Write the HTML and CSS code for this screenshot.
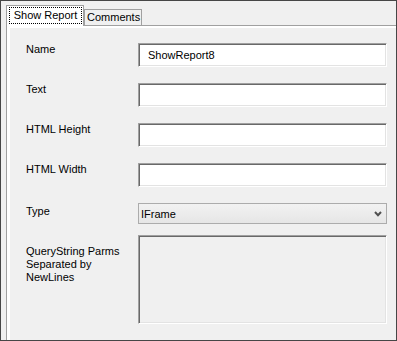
FILE: index.html
```html
<!DOCTYPE html>
<html lang="en">
<head>
    <meta charset="UTF-8">
    <title>Show Report</title>
    <link rel="stylesheet" href="styles.css">
</head>
<body>
    <div class="window">
        <!-- Tab headers -->
        <div class="tabs">
            <div class="tab active"><span class="focus">Show Report</span></div>
            <div class="tab">Comments</div>
        </div>

        <div class="tab-body">
            <div class="page">
                <div class="row">
                    <label>Name</label>
                    <input type="text" class="field" value="ShowReport8">
                </div>
                <div class="row">
                    <label>Text</label>
                    <input type="text" class="field">
                </div>
                <div class="row">
                    <label>HTML Height</label>
                    <input type="text" class="field">
                </div>
                <div class="row">
                    <label>HTML Width</label>
                    <input type="text" class="field">
                </div>
                <div class="row row-type">
                    <label>Type</label>
                    <div class="combo-wrap">
                        <select class="combo">
                            <option>IFrame</option>
                            <option>Inline</option>
                        </select>
                        <svg class="chevron" width="8" height="6" viewBox="0 0 8 6">
                            <polyline points="1,1 4,4.2 7,1" fill="none" stroke="#505050" stroke-width="2"/>
                        </svg>
                    </div>
                </div>
                <div class="row row-parms">
                    <label>QueryString Parms<br>Separated by<br>NewLines</label>
                    <textarea class="field area"></textarea>
                </div>
            </div>
        </div>
    </div>
</body>
</html>
```

FILE: styles.css
```css
:root {
    --face: #f0f0f0;
    --tab-border: #a0a0a0;
    --dark: #696969;
    --shadow: #a0a0a0;
    --light: #e3e3e3;
}

* {
    box-sizing: border-box;
}

body {
    margin: 0;
    background: var(--face);
    font-family: "Liberation Sans", Arial, sans-serif;
    font-size: 11px;
    color: #000;
}

.window {
    width: 397px;
    height: 341px;
    border: 1px solid #464646;
    background: var(--face);
    display: flex;
    flex-direction: column;
}

/* Tabs */
.tabs {
    display: flex;
    align-items: flex-end;
    height: 27px;
    padding-left: 5px;
}

.tab {
    height: 16px;
    padding: 0 1px 0 2px;
    line-height: 15px;
    border: 1px solid var(--tab-border);
    border-bottom: none;
    background: var(--face);
}

.tab.active {
    position: relative;
    z-index: 1;
    height: 21px;
    width: 78px;
    margin-bottom: -1px;
    padding: 1px 1px 0 2px;
    background: #fff;
}

.focus {
    display: block;
    width: 73px;
    height: 17px;
    border: 1px dotted #000;
    line-height: 15px;
    text-align: center;
}

/* Tab body */
.tab-body {
    flex: 1;
    display: flex;
    margin-left: 5px;
    border-top: 1px solid var(--tab-border);
    border-left: 1px solid var(--tab-border);
    background: #fff;
    padding: 2px 0 0 3px;
}

.page {
    flex: 1;
    background: var(--face);
    padding: 15px 0 0 16px;
}

.row {
    display: flex;
    align-items: flex-start;
    margin-bottom: 16px;
}

.row label {
    width: 112px;
    line-height: 13px;
}

.field {
    width: 249px;
    height: 24px;
    margin: 0;
    padding: 0 0 0 9px;
    font: inherit;
    color: #000;
    background: #fff;
    border: 1px solid;
    border-color: var(--shadow) #fff #fff var(--shadow);
    box-shadow: inset 1px 1px 0 var(--dark), inset -1px -1px 0 var(--light);
    outline: none;
}

.row-type {
    margin-bottom: 11px;
}

.row-type label {
    padding-top: 2px;
}

.combo-wrap {
    position: relative;
    width: 249px;
    height: 21px;
}

.combo {
    appearance: none;
    -webkit-appearance: none;
    width: 100%;
    height: 100%;
    margin: 0;
    padding: 0 0 0 2px;
    font: inherit;
    color: #000;
    border: 1px solid #acacac;
    border-radius: 0;
    background: linear-gradient(#f2f2f2, #e6e6e6);
    outline: none;
}

.chevron {
    position: absolute;
    right: 5px;
    top: 8px;
    pointer-events: none;
}

.row-parms label {
    padding-top: 10px;
}

.area {
    height: 89px;
    background: var(--face);
    resize: none;
}
```
